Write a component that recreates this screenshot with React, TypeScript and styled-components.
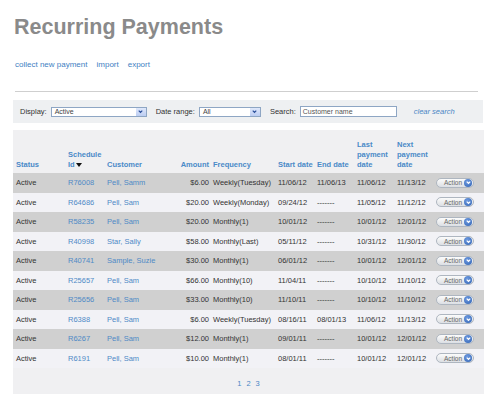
import React from "react";
import styled, { createGlobalStyle } from "styled-components";

const GlobalStyle = createGlobalStyle`
    html, body {
        margin: 0;
        padding: 0;
        background: #ffffff;
    }
    body {
        font-family: "Liberation Sans", Arial, sans-serif;
        color: #333333;
    }
`

const Page = styled.div`
    width: 471px;
    padding: 15px 0 0 13px;
`
const Title = styled.h1`
    margin: 0;
    font-size: 21.5px;
    line-height: 24px;
    font-weight: 700;
    color: #8a8a8a;
    padding-left: 1px;
`
const LinkRow = styled.div`
    display: flex;
    gap: 9px;
    margin-top: 21px;
    padding-left: 2px;
    font-size: 8px;
    line-height: 10px;
`
const TopLink = styled.a`
    color: #3f7fc3;
    text-decoration: none;
`
const Rule = styled.hr`
    border: none;
    border-top: 1px solid #cfcfcf;
    margin: 21px 6px 0 2px;
    height: 0;
`
const FilterBar = styled.div`
    display: flex;
    align-items: center;
    height: 23px;
    margin-top: 8px;
    padding: 0 0 0 7px;
    background: #eef0f2;
    font-size: 7.5px;
    width: 463px;
`
const Label = styled.span`
    color: #333;
    margin-right: 4px;
`
const SelectBox = styled.div<{ w: number }>`
    display: flex;
    align-items: center;
    width: ${({ w }) => w}px;
    height: 10px;
    border: 1px solid #8ea6c4;
    background: #fff;
    margin-right: 9px;
    box-sizing: border-box;
`
const SelectValue = styled.span`
    flex: 1;
    padding-left: 3px;
    font-size: 7px;
    color: #444;
    line-height: 8px;
`
const SelectArrow = styled.span`
    width: 10px;
    height: 8px;
    background: linear-gradient(#dfe8fb, #bccdf2);
    display: flex;
    align-items: center;
    justify-content: center;
`
const SearchInput = styled.div`
    width: 97px;
    height: 11px;
    border: 1px solid #8ea6c4;
    background: #fff;
    box-sizing: border-box;
    font-size: 7px;
    line-height: 9px;
    color: #555;
    padding-left: 2px;
`
const ClearSearch = styled.a`
    margin-left: 17px;
    color: #4a86c5;
    font-style: italic;
    text-decoration: none;
`
const Panel = styled.div`
    margin-top: 7px;
    width: 471px;
    background: #f0f0f2;
`
const Table = styled.table`
    width: 471px;
    table-layout: fixed;
    border-collapse: collapse;
    font-size: 7.5px;
`
const Th = styled.th<{ align?: string }>`
    height: 40px;
    padding: 0 1px 3px 3px;
    vertical-align: bottom;
    text-align: ${({ align }) => align || "left"};
    color: #4a8ac8;
    font-weight: 700;
    line-height: 10px;
`
const Row = styled.tr<{ shade: boolean }>`
    height: 19.5px;
    background: ${({ shade }) => (shade ? "#d0d0d0" : "#f2f2f6")};
`
const Td = styled.td<{ align?: string; link?: boolean }>`
    padding: 0 1px 0 3px;
    text-align: ${({ align }) => align || "left"};
    color: ${({ link }) => (link ? "#4f8ac6" : "#333")};
    white-space: nowrap;
    overflow: hidden;
`
const SortMark = styled.span`
    display: inline-block;
    width: 0;
    height: 0;
    margin-left: 1px;
    border-left: 3.5px solid transparent;
    border-right: 3.5px solid transparent;
    border-top: 4px solid #111;
    vertical-align: middle;
`
const ActionButton = styled.div`
    display: flex;
    align-items: center;
    justify-content: space-between;
    width: 38px;
    height: 10px;
    box-sizing: border-box;
    padding: 0 1px 0 7px;
    border: 1px solid #aeb6c0;
    border-radius: 6px;
    background: linear-gradient(#fbfbfb, #dcdfe4);
    font-size: 6.5px;
    color: #666;
`
const ActionDot = styled.span`
    display: flex;
    align-items: center;
    justify-content: center;
    width: 8px;
    height: 8px;
    border-radius: 50%;
    background: radial-gradient(circle at 40% 35%, #6f9be0, #2f62b3);
`
const Pager = styled.div`
    display: flex;
    justify-content: center;
    gap: 5px;
    height: 26px;
    padding-top: 11px;
    box-sizing: border-box;
    font-size: 7.5px;
    line-height: 9px;
`
const PageLink = styled.a`
    color: #4a86c5;
    text-decoration: none;
`

const Chevron: React.FC<{ color: string; size: number }> = ({ color, size }) => (
    <svg width={size} height={size} viewBox="0 0 8 8">
        <path d="M2 3 L4 5 L6 3" fill="none" stroke={color} strokeWidth="1.4" />
    </svg>
)

const rows = [
    ["R76008", "Pell, Samm", "$6.00", "Weekly(Tuesday)", "11/06/12", "11/06/13", "11/06/12", "11/13/12"],
    ["R64686", "Pell, Sam", "$20.00", "Weekly(Monday)", "09/24/12", "-------", "11/05/12", "11/12/12"],
    ["R58235", "Pell, Sam", "$20.00", "Monthly(1)", "10/01/12", "-------", "10/01/12", "12/01/12"],
    ["R40998", "Star, Sally", "$58.00", "Monthly(Last)", "05/11/12", "-------", "10/31/12", "11/30/12"],
    ["R40741", "Sample, Suzie", "$30.00", "Monthly(1)", "06/01/12", "-------", "10/01/12", "12/01/12"],
    ["R25657", "Pell, Sam", "$66.00", "Monthly(10)", "11/04/11", "-------", "10/10/12", "11/10/12"],
    ["R25656", "Pell, Sam", "$33.00", "Monthly(10)", "11/10/11", "-------", "10/10/12", "11/10/12"],
    ["R6388", "Pell, Sam", "$6.00", "Weekly(Tuesday)", "08/16/11", "08/01/13", "11/06/12", "11/13/12"],
    ["R6267", "Pell, Sam", "$12.00", "Monthly(1)", "09/01/11", "-------", "10/01/12", "12/01/12"],
    ["R6191", "Pell, Sam", "$10.00", "Monthly(1)", "08/01/11", "-------", "10/01/12", "12/01/12"],
]

const widths = [52, 39, 66, 40, 65, 39, 40, 40, 39, 51]

export default function App() {
    return (
        <>
            <GlobalStyle />
            <Page>
                <Title>Recurring Payments</Title>
                <LinkRow>
                    <TopLink href="#">collect new payment</TopLink>
                    <TopLink href="#">import</TopLink>
                    <TopLink href="#">export</TopLink>
                </LinkRow>
                <Rule />
                <FilterBar>
                    <Label>Display:</Label>
                    <SelectBox w={96}>
                        <SelectValue>Active</SelectValue>
                        <SelectArrow><Chevron color="#2a4f9a" size={7} /></SelectArrow>
                    </SelectBox>
                    <Label>Date range:</Label>
                    <SelectBox w={62}>
                        <SelectValue>All</SelectValue>
                        <SelectArrow><Chevron color="#2a4f9a" size={7} /></SelectArrow>
                    </SelectBox>
                    <Label>Search:</Label>
                    <SearchInput>Customer name</SearchInput>
                    <ClearSearch href="#">clear search</ClearSearch>
                </FilterBar>
                <Panel>
                    <Table>
                        <colgroup>
                            {widths.map((w, i) => <col key={i} style={{ width: w }} />)}
                        </colgroup>
                        <thead>
                            <tr>
                                <Th>Status</Th>
                                <Th>Schedule<br />Id<SortMark /></Th>
                                <Th>Customer</Th>
                                <Th align="right">Amount</Th>
                                <Th>Frequency</Th>
                                <Th>Start date</Th>
                                <Th>End date</Th>
                                <Th>Last<br />payment<br />date</Th>
                                <Th>Next<br />payment<br />date</Th>
                                <Th />
                            </tr>
                        </thead>
                        <tbody>
                            {rows.map((r, i) => (
                                <Row key={r[0]} shade={i % 2 === 0}>
                                    <Td>Active</Td>
                                    <Td link>{r[0]}</Td>
                                    <Td link>{r[1]}</Td>
                                    <Td align="right">{r[2]}</Td>
                                    <Td>{r[3]}</Td>
                                    <Td>{r[4]}</Td>
                                    <Td>{r[5]}</Td>
                                    <Td>{r[6]}</Td>
                                    <Td>{r[7]}</Td>
                                    <Td>
                                        <ActionButton>
                                            Action
                                            <ActionDot><Chevron color="#ffffff" size={7} /></ActionDot>
                                        </ActionButton>
                                    </Td>
                                </Row>
                            ))}
                        </tbody>
                    </Table>
                    <Pager>
                        <PageLink href="#">1</PageLink>
                        <PageLink href="#">2</PageLink>
                        <PageLink href="#">3</PageLink>
                    </Pager>
                </Panel>
            </Page>
        </>
    )
}
